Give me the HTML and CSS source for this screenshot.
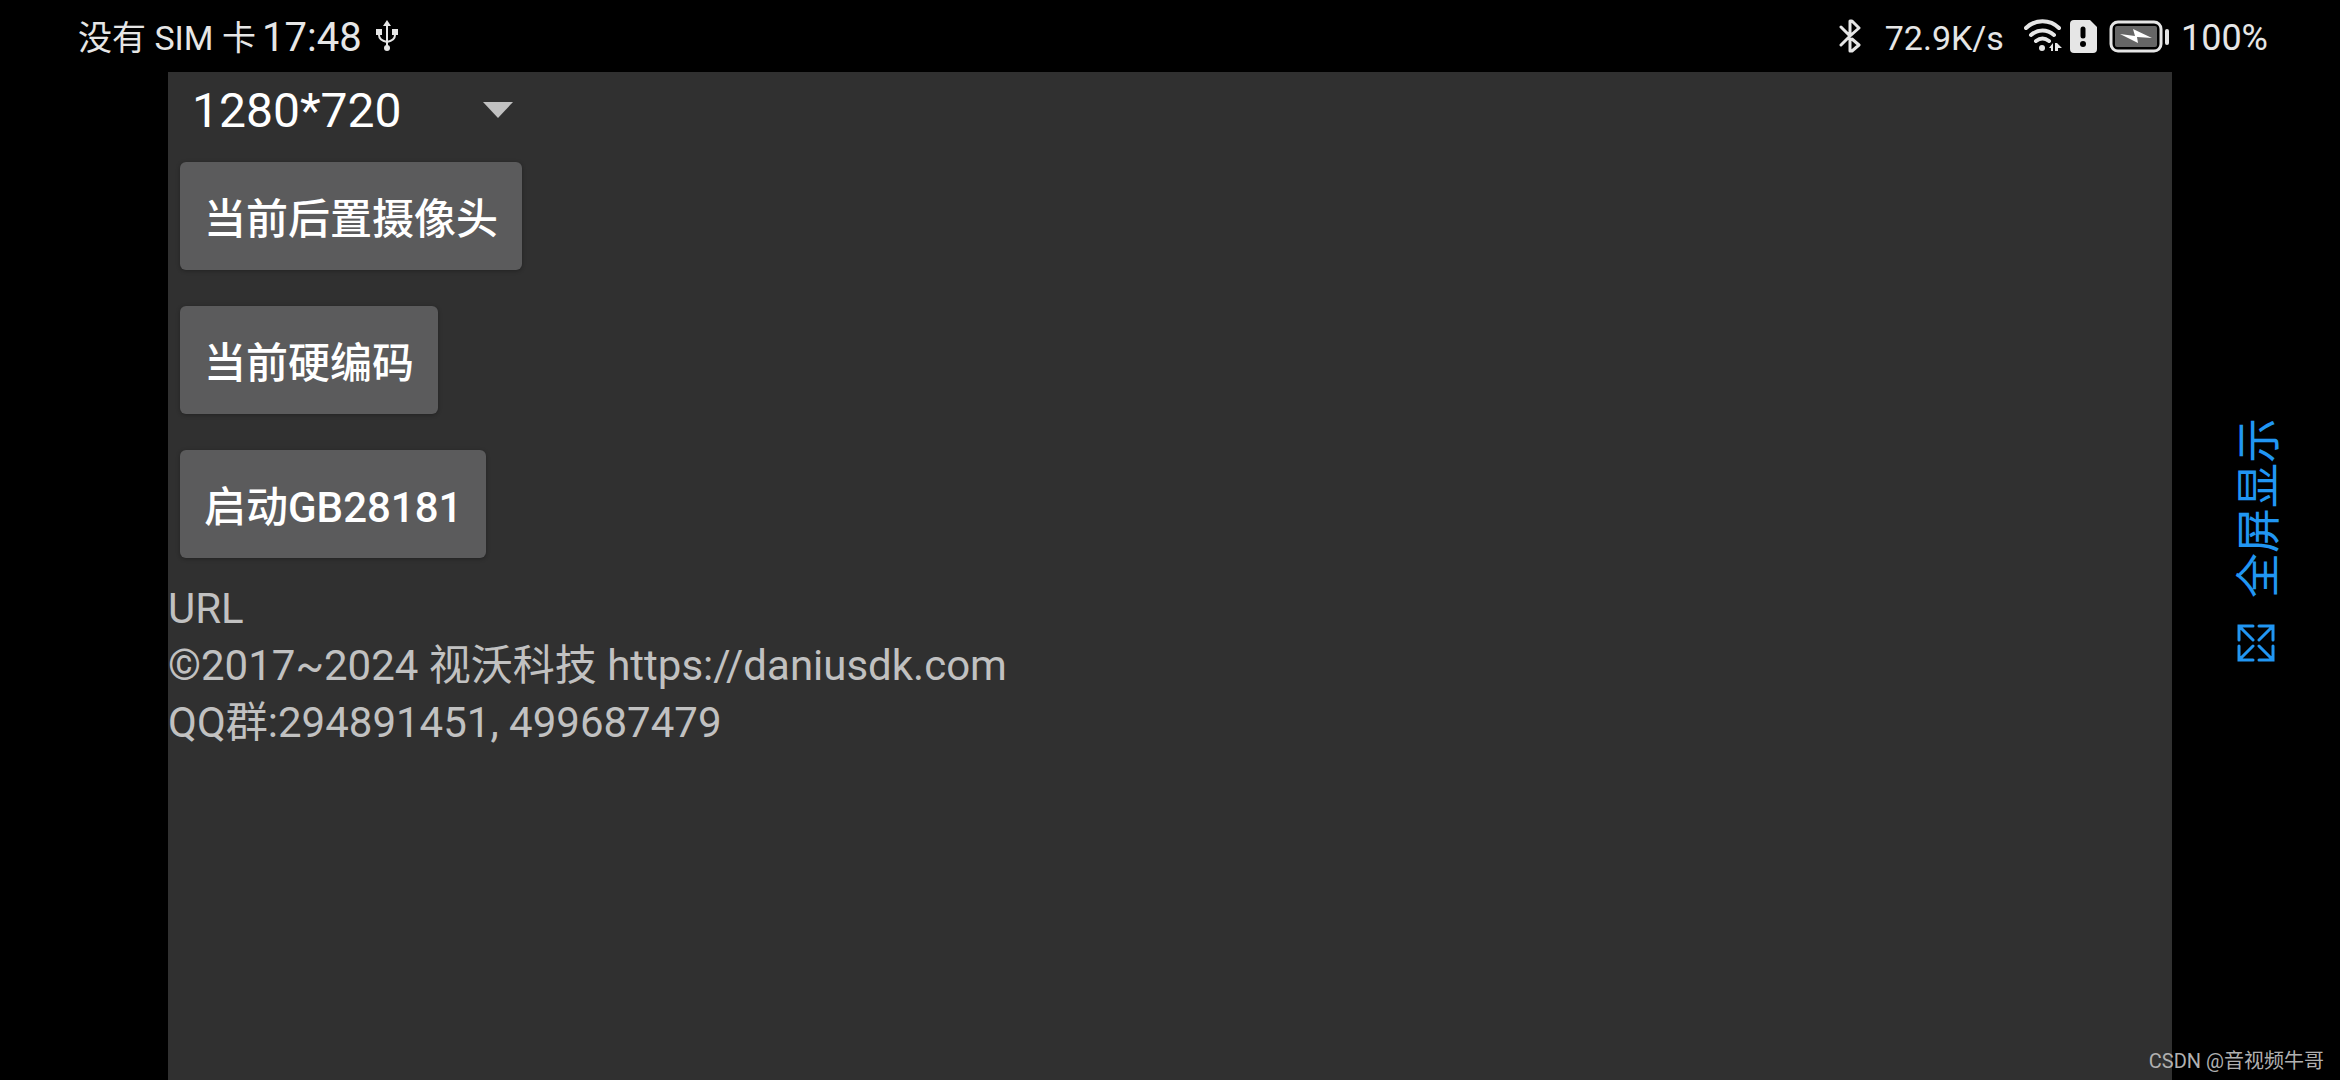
FILE: index.html
```html
<!DOCTYPE html>
<html lang="zh-CN">
<head>
  <meta charset="UTF-8" />
  <meta name="viewport" content="width=device-width, initial-scale=1.0"/>
  <title>GB28181</title>
  <link rel="stylesheet" href="styles.css">
</head>
<body>
  <header class="status-bar">
    <div class="status-left">
      <span class="carrier">没有 SIM 卡</span>
      <span class="time">17:48</span>
      <svg class="usb" width="22" height="34" viewBox="0 0 22 34" fill="none" stroke="currentColor" stroke-width="2">
        <path d="M11 5v24M3 13v3c0 4 3 6 8 7M19 13v3c0 4-3 6-8 7"/>
        <path d="M11 1l4 6H7zM0 10h6v6H0zM16 10h6v6h-6z" fill="currentColor" stroke="none"/>
        <circle cx="11" cy="29" r="3" fill="currentColor" stroke="none"/>
      </svg>
    </div>
    <div class="status-right">
      <svg class="bluetooth" width="22" height="34" viewBox="0 0 22 34" fill="none" stroke="currentColor" stroke-width="3" stroke-linecap="round" stroke-linejoin="round">
        <path d="M2 8l9 9 9-8-7-7h-2v12M2 26l9-9M13 20l7 6-7 6h-2V20"/>
      </svg>
      <span class="speed">72.9K/s</span>
      <svg class="wifi" width="38" height="34" viewBox="0 0 38 34" fill="none" stroke="currentColor" stroke-width="4" stroke-linecap="round">
        <path d="M2 9c9-9 24-9 33 0M7 16c7-6 16-6 23 0M12 22c4-3 9-3 13 0"/>
        <circle cx="18" cy="29" r="3" fill="currentColor" stroke="none"/>
        <path d="M25 29l4-5v8h-2v-3zM31 24h2l5 5h-4v3h-3z" fill="currentColor" stroke="none"/>
      </svg>
      <svg class="sim" width="27" height="34" viewBox="0 0 27 34">
        <path d="M4 1h16l7 7v22a4 4 0 0 1-4 4H4a4 4 0 0 1-4-4V5a4 4 0 0 1 4-4z" fill="currentColor"/>
        <path d="M13 10v7" stroke="#000" stroke-width="5" stroke-linecap="round"/>
        <circle cx="13" cy="25" r="3" fill="#000"/>
      </svg>
      <svg class="battery" width="60" height="34" viewBox="0 0 60 34">
        <rect x="2" y="3" width="50" height="29" rx="7" fill="none" stroke="currentColor" stroke-width="3"/>
        <rect x="6" y="7" width="42" height="21" rx="2" fill="#666"/>
        <path d="M11 15l15 2-2-7 19 9-15-1 1 6z" fill="#fff"/>
        <rect x="56" y="10" width="4" height="16" rx="2" fill="currentColor"/>
      </svg>
      <span class="level">100%</span>
    </div>
  </header>

  <div class="screen">
    <main class="panel">
      <div class="spinner">
        <select aria-label="分辨率">
          <option>1280*720</option>
        </select>
        <svg width="30" height="16" viewBox="0 0 30 16"><path d="M0 0h30L15 16z" fill="currentColor"/></svg>
      </div>
      <div class="buttons">
        <button type="button">当前后置摄像头</button>
        <button type="button">当前硬编码</button>
        <button type="button">启动GB28181</button>
      </div>
      <div class="info">
        <p>URL</p>
        <p>©2017~2024 视沃科技 https://daniusdk.com</p>
        <p>QQ群:294891451, 499687479</p>
      </div>
    </main>
    <aside class="side">
      <button type="button" class="fullscreen">
        <svg width="38" height="38" viewBox="0 0 38 38" fill="none" stroke="currentColor" stroke-width="3" stroke-linecap="round">
          <path d="M2 16V2h14M2 2l14 14M22 2h14v14M36 2L22 16M2 22v14h14M2 36l14-14M36 22v14H22M36 36L22 22"/>
        </svg>
        <span>全屏显示</span>
      </button>
    </aside>
  </div>

  <div class="watermark">CSDN @音视频牛哥</div>
</body>
</html>
```

FILE: styles.css
```css
html, body {
  margin: 0;
  padding: 0;
  height: 100%;
  background: #000;
  font-family: Roboto, "Noto Sans CJK SC", sans-serif;
}
body {
  display: flex;
  flex-direction: column;
  overflow: hidden;
}
.status-bar {
  display: flex;
  justify-content: space-between;
  align-items: center;
  height: 72px;
  padding: 0 72px 0 78px;
  box-sizing: border-box;
  color: #e6e6e6;
  white-space: nowrap;
}
.status-left, .status-right {
  display: flex;
  align-items: center;
}
.status-bar span {
  padding-top: 4px;
  line-height: 48px;
}
.carrier {
  font-size: 34px;
}
.time {
  margin-left: 6px;
  font-size: 40px;
}
.usb {
  margin-left: 14px;
}
.speed {
  margin: 0 20px 0 24px;
  font-size: 34px;
}
.sim {
  margin: 0 12px 0 8px;
}
.level {
  margin-left: 12px;
  font-size: 36px;
}
.screen {
  flex: 1;
  display: flex;
  padding-left: 168px;
}
.panel {
  flex: 1;
  background: #303030;
}
.spinner {
  position: relative;
  width: 360px;
  color: #c1c1c1;
}
.spinner select {
  appearance: none;
  width: 100%;
  height: 78px;
  padding: 0 24px 2px;
  border: none;
  background: none;
  color: #fff;
  font: 48px Roboto, sans-serif;
}
.spinner svg {
  position: absolute;
  top: 30px;
  right: 15px;
}
.buttons {
  display: flex;
  flex-direction: column;
  align-items: flex-start;
  gap: 36px;
  padding: 12px 12px 18px;
}
.buttons button {
  height: 108px;
  padding: 0 24px 2px;
  border: none;
  border-radius: 6px;
  background: #5b5b5c;
  box-shadow: 0 1px 4px rgba(0,0,0,0.3);
  color: #fff;
  font-family: inherit;
  font-size: 42px;
  font-weight: 500;
  cursor: pointer;
}
.info {
  padding-top: 4px;
}
.info p {
  margin: 0;
  font-size: 42px;
  line-height: 57px;
  color: #c1c1c1;
}
.side {
  display: flex;
  justify-content: center;
  align-items: center;
  width: 168px;
  padding-bottom: 72px;
  box-sizing: border-box;
}
.fullscreen {
  display: flex;
  flex-direction: column-reverse;
  align-items: center;
  gap: 26px;
  padding: 0;
  border: none;
  background: none;
  color: #2196f3;
  font-family: "Noto Sans CJK SC", sans-serif;
  font-size: 45px;
  line-height: 48px;
  cursor: pointer;
}
/* reads from bottom to top */
.fullscreen span {
  writing-mode: vertical-rl;
  text-orientation: sideways;
  transform: rotate(180deg);
}
.watermark {
  position: absolute;
  right: 16px;
  bottom: 6px;
  font: 20px Roboto, "Noto Sans CJK SC", sans-serif;
  color: #b0b0b0;
}
```
